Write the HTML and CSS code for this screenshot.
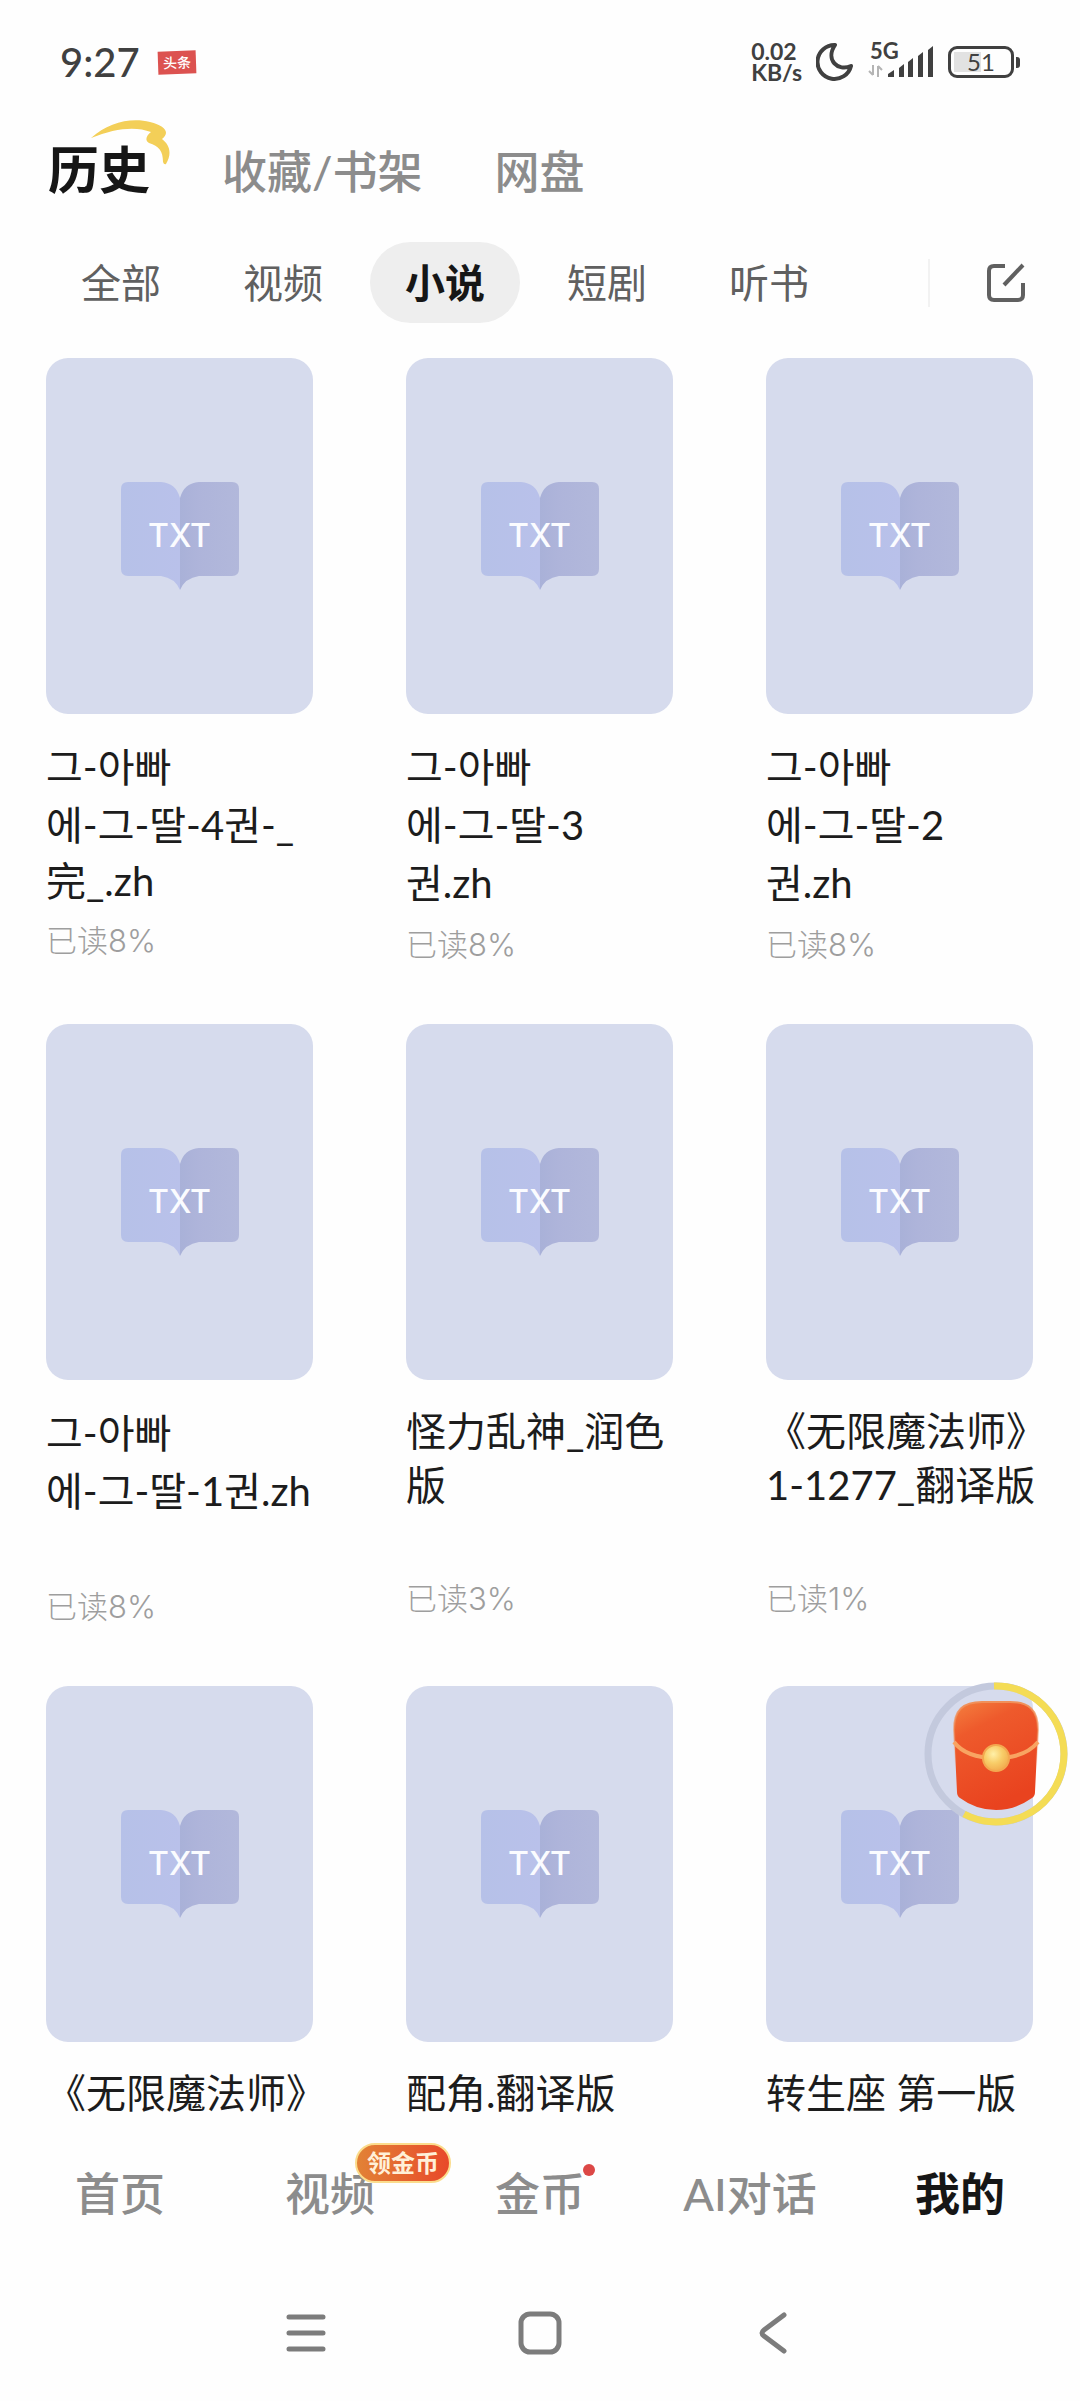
FILE: index.html
```html
<!DOCTYPE html>
<html lang="zh-CN">
<head>
<meta charset="utf-8">
<meta name="viewport" content="width=device-width, initial-scale=1">
<title>历史</title>
<link rel="stylesheet" href="styles.css">
</head>
<body>
<svg class="defs" aria-hidden="true">
  <defs>
    <linearGradient id="page-left" x1="0" x2="1"><stop offset="0" stop-color="#b6c1e8"/><stop offset="1" stop-color="#b9c1ea"/></linearGradient>
    <linearGradient id="page-right" x1="0" x2="1"><stop offset="0" stop-color="#a9b1d8"/><stop offset=".3" stop-color="#aeb4da"/><stop offset="1" stop-color="#b2b8db"/></linearGradient>
  </defs>
  <symbol id="book" viewBox="0 0 118 110">
    <path d="M7 1H40Q55 2 59 17V109Q54 97 40 95H7Q0 95 0 88V8Q0 1 7 1Z" fill="url(#page-left)"/>
    <path d="M111 1H78Q63 2 59 17V109Q64 97 78 95H111Q118 95 118 88V8Q118 1 111 1Z" fill="url(#page-right)"/>
  </symbol>
</svg>

<div class="app">
  <div class="status">
    <span class="clock">9:27</span>
    <span class="news">头条</span>
    <div class="status-right">
      <div class="speed"><div>0.02</div><div>KB/s</div></div>
      <svg width="38" height="40" viewBox="0 0 38 40"><path d="M19 3A17 17 0 1 0 35 24C22 30 9 18 19 3Z" fill="none" stroke="#404040" stroke-width="4" stroke-linejoin="round"/></svg>
      <div class="signal">
        <span class="net">5G</span>
        <svg width="66" height="34" viewBox="0 0 66 34">
          <path d="M5 20V30M1 26L5 30M10 32V21M14 25L10 21" fill="none" stroke="#b4b4b4" stroke-width="2"/>
          <g fill="#404040"><path d="M20 29L26 25V32H20Z"/><path d="M31 23L36 19V32H31Z"/><path d="M40 17L45 13V32H40Z"/><path d="M50 11L55 7V32H50Z"/><path d="M60 5L65 1V32H60Z"/></g>
        </svg>
      </div>
      <div class="battery"><span>51</span></div>
    </div>
  </div>

  <nav class="tabs">
    <a href="#" class="tab active">历史
      <svg class="swoosh" width="80" height="48" viewBox="0 0 80 48"><path d="M1 20C18 4 42-1 60 4C76 8 80 15 72 21C80 27 82 36 76 46Q74 47 73 44C73 33 69 28 59 25C54 22 57 17 61 14C46 8 25 10 1 20Z" fill="#f3cf58"/></svg>
    </a>
    <a href="#" class="tab">收藏/书架</a>
    <a href="#" class="tab">网盘</a>
  </nav>

  <div class="filters">
    <button class="filter">全部</button>
    <button class="filter">视频</button>
    <button class="filter active">小说</button>
    <button class="filter">短剧</button>
    <button class="filter">听书</button>
    <button class="edit" aria-label="编辑"><svg width="40" height="40" viewBox="0 0 40 40" fill="none" stroke="#606060" stroke-width="4"><path d="M19 3H8Q3 3 3 8V32Q3 37 8 37H32Q37 37 37 32V20"/><path d="M18 22L37 2"/></svg></button>
  </div>

  <main class="shelf">
    <a href="#" class="book"><div class="cover"><svg width="118" height="110"><use href="#book"/></svg><span>TXT</span></div>
      <div class="title"><span class="ko">그-아빠</span><span class="ko">에-그-딸-4권-_</span><span>完_.zh</span></div><div class="read">已读8%</div></a>
    <a href="#" class="book"><div class="cover"><svg width="118" height="110"><use href="#book"/></svg><span>TXT</span></div>
      <div class="title"><span class="ko">그-아빠</span><span class="ko">에-그-딸-3</span><span class="ko">권.zh</span></div><div class="read">已读8%</div></a>
    <a href="#" class="book"><div class="cover"><svg width="118" height="110"><use href="#book"/></svg><span>TXT</span></div>
      <div class="title"><span class="ko">그-아빠</span><span class="ko">에-그-딸-2</span><span class="ko">권.zh</span></div><div class="read">已读8%</div></a>

    <a href="#" class="book"><div class="cover"><svg width="118" height="110"><use href="#book"/></svg><span>TXT</span></div>
      <div class="title"><span class="ko">그-아빠</span><span class="ko">에-그-딸-1권.zh</span><span></span></div><div class="read">已读8%</div></a>
    <a href="#" class="book"><div class="cover"><svg width="118" height="110"><use href="#book"/></svg><span>TXT</span></div>
      <div class="title"><span>怪力乱神_润色</span><span>版</span><span></span></div><div class="read">已读3%</div></a>
    <a href="#" class="book"><div class="cover"><svg width="118" height="110"><use href="#book"/></svg><span>TXT</span></div>
      <div class="title"><span>《无限魔法师》</span><span>1-1277_翻译版</span><span></span></div><div class="read">已读1%</div></a>

    <a href="#" class="book"><div class="cover"><svg width="118" height="110"><use href="#book"/></svg><span>TXT</span></div>
      <div class="title"><span>《无限魔法师》</span></div></a>
    <a href="#" class="book"><div class="cover"><svg width="118" height="110"><use href="#book"/></svg><span>TXT</span></div>
      <div class="title"><span>配角.翻译版</span></div></a>
    <a href="#" class="book"><div class="cover"><svg width="118" height="110"><use href="#book"/></svg><span>TXT</span></div>
      <div class="title"><span>转生座 第一版</span></div></a>
  </main>

  <button class="packet" aria-label="红包">
    <svg width="144" height="144" viewBox="0 0 144 144">
      <defs>
        <linearGradient id="env" x1="0" y1="0" x2=".4" y2="1"><stop offset="0" stop-color="#f4803f"/><stop offset=".3" stop-color="#ee5a2c"/><stop offset="1" stop-color="#e9431f"/></linearGradient>
        <linearGradient id="rim" x1="0" y1="0" x2="0" y2="1"><stop offset="0" stop-color="#f0905a"/><stop offset=".6" stop-color="#f0905a" stop-opacity="0"/></linearGradient>
        <radialGradient id="coin" cx=".4" cy=".35" r=".7"><stop offset="0" stop-color="#fff0a8"/><stop offset=".5" stop-color="#f8cd68"/><stop offset="1" stop-color="#f1a94c"/></radialGradient>
      </defs>
      <circle cx="72" cy="72" r="68" fill="none" stroke="#c3c9dd" stroke-width="7"/>
      <path d="M70 4A68 68 0 1 1 40 132" fill="none" stroke="#f4dc55" stroke-width="7"/>
      <path d="M30 48C30 28 39 20 58 20H86C105 20 114 28 114 48L111 110Q111 114 108 116Q91 128 72 128Q52 128 36 116Q33 114 33 110Z" fill="url(#env)" stroke="url(#rim)" stroke-width="2"/>
      <path d="M30 60Q42 76 72 76Q101 76 114 60" fill="none" stroke="#f8a462" stroke-width="4"/>
      <circle cx="72" cy="76" r="13" fill="url(#coin)" stroke="#f3a850" stroke-width="2"/>
    </svg>
  </button>

  <nav class="bottom">
    <a href="#"><span>首页</span></a>
    <a href="#"><span>视频<b class="badge">领金币</b></span></a>
    <a href="#"><span>金币<i class="dot"></i></span></a>
    <a href="#"><span>AI对话</span></a>
    <a href="#" class="active"><span>我的</span></a>
  </nav>

  <div class="system">
    <button aria-label="菜单"><svg width="44" height="44" viewBox="0 0 44 44"><path d="M5 6H39M5 22H39M5 38H39"/></svg></button>
    <button aria-label="主页"><svg width="44" height="44" viewBox="0 0 44 44"><rect x="3" y="3" width="38" height="38" rx="9"/></svg></button>
    <button aria-label="返回"><svg width="44" height="44" viewBox="0 0 44 44"><path d="M32 4L12 19Q8 22 12 25L32 40"/></svg></button>
  </div>
</div>
</body>
</html>
```
FILE: styles.css
```css
* { box-sizing: border-box; }
body {
  margin: 0;
  background: #fefefe;
  color: #1c1c1c;
  font-family: Lato, "Noto Sans CJK SC", "Noto Sans CJK KR", sans-serif;
}
a { color: inherit; text-decoration: none; }
button { border: 0; padding: 0; background: none; font: inherit; color: inherit; }
svg { display: block; }
.defs { position: absolute; width: 0; height: 0; }

.app {
  position: relative;
  display: flex;
  flex-direction: column;
  height: 100vh;
  overflow: hidden;
}

.status {
  display: flex;
  align-items: center;
  height: 124px;
  padding: 0 60px;
  color: #404040;
}
.clock { font-size: 40px; font-weight: 500; }
.news {
  margin-left: 18px;
  padding: 0 5px;
  background: #dc5250;
  color: #fff;
  font-size: 14px;
  font-weight: 500;
  line-height: 23px;
  transform: rotate(-2deg);
}
.status-right { display: flex; align-items: center; gap: 14px; margin-left: auto; }
.speed { font-size: 23px; font-weight: 700; line-height: 21px; }
.signal { position: relative; }
.net { position: absolute; left: 2px; top: -5px; font-size: 22px; font-weight: 700; line-height: 22px; }
.battery {
  position: relative;
  width: 66px;
  height: 32px;
  margin-right: 6px;
  border: 3px solid #404040;
  border-radius: 9px;
  background: linear-gradient(to right, #e2e2e2 50%, transparent 50%) 3px 3px / 54px 20px no-repeat;
  font-size: 24px;
  line-height: 26px;
  text-align: center;
}
.battery::after {
  content: "";
  position: absolute;
  right: -9px;
  top: 8px;
  width: 4px;
  height: 11px;
  border-radius: 0 3px 3px 0;
  background: #404040;
}

.tabs {
  display: flex;
  align-items: baseline;
  gap: 72px;
  height: 118px;
  padding: 6px 48px 0;
}
.tab { position: relative; color: #8c8c8c; font-size: 45px; font-weight: 500; white-space: nowrap; }
.tab.active { color: #161616; font-size: 51px; font-weight: 700; }
.swoosh { position: absolute; left: 42px; top: -12px; }

.filters {
  display: flex;
  gap: 12px;
  height: 116px;
  padding: 0 46px;
}
.filter {
  flex: 0 0 150px;
  height: 81px;
  padding-bottom: 4px;
  border-radius: 41px;
  color: #606060;
  font-size: 40px;
}
.filter.active { background: #eee; color: #161616; font-weight: 700; }
.edit {
  display: flex;
  align-items: center;
  height: 48px;
  margin: 17px 8px 0 auto;
  padding-left: 56px;
  border-left: 2px solid #f2f2f2;
}

.shelf {
  flex: 1;
  min-height: 0;
  overflow: hidden;
  display: grid;
  grid-template-columns: repeat(3, 1fr);
  align-content: start;
  gap: 58px 93px;
  padding: 0 47px 0 46px;
}
.book { min-width: 0; }
.cover {
  display: grid;
  place-items: center;
  place-content: center;
  aspect-ratio: 3 / 4;
  border-radius: 22px;
  background: #d6dbed;
}
.cover > * { grid-area: 1 / 1; }
.cover span { color: #fbfcff; font: 500 32px/40px Inter, sans-serif; }
.title { margin-top: 24px; font-size: 40px; }
.title span { display: block; height: 54px; line-height: 54px; white-space: nowrap; }
.title .ko { height: 58px; line-height: 58px; }
.read {
  margin-top: 12px;
  color: #9e9e9e;
  font-family: Inter, "Noto Sans CJK SC", sans-serif;
  font-size: 31px;
  font-weight: 300;
  line-height: 42px;
}

.packet { position: absolute; right: 12px; bottom: 575px; }

.bottom {
  display: grid;
  grid-template-columns: repeat(5, 1fr);
  align-items: center;
  height: 140px;
  padding: 0 15px;
  background: #fefefe;
  color: #8c8c8c;
  font-size: 45px;
  font-weight: 500;
  line-height: 46px;
  text-align: center;
}
.bottom span { position: relative; white-space: nowrap; }
.bottom .active { color: #161616; font-weight: 700; }
.badge {
  position: absolute;
  left: 70px;
  top: -24px;
  padding: 0 10px;
  border: 2px solid #fbdc8c;
  border-radius: 20px;
  background: linear-gradient(to right, #e28236, #e8492a);
  color: #fff0d8;
  font-size: 24px;
  font-weight: 700;
  line-height: 36px;
}
.dot {
  position: absolute;
  right: -10px;
  top: -3px;
  width: 12px;
  height: 12px;
  border-radius: 50%;
  background: #dc4846;
}

.system {
  display: flex;
  align-items: center;
  justify-content: center;
  gap: 190px;
  height: 137px;
}
.system svg { fill: none; stroke: #7c7c7c; stroke-width: 5; stroke-linecap: round; stroke-linejoin: round; }
```
